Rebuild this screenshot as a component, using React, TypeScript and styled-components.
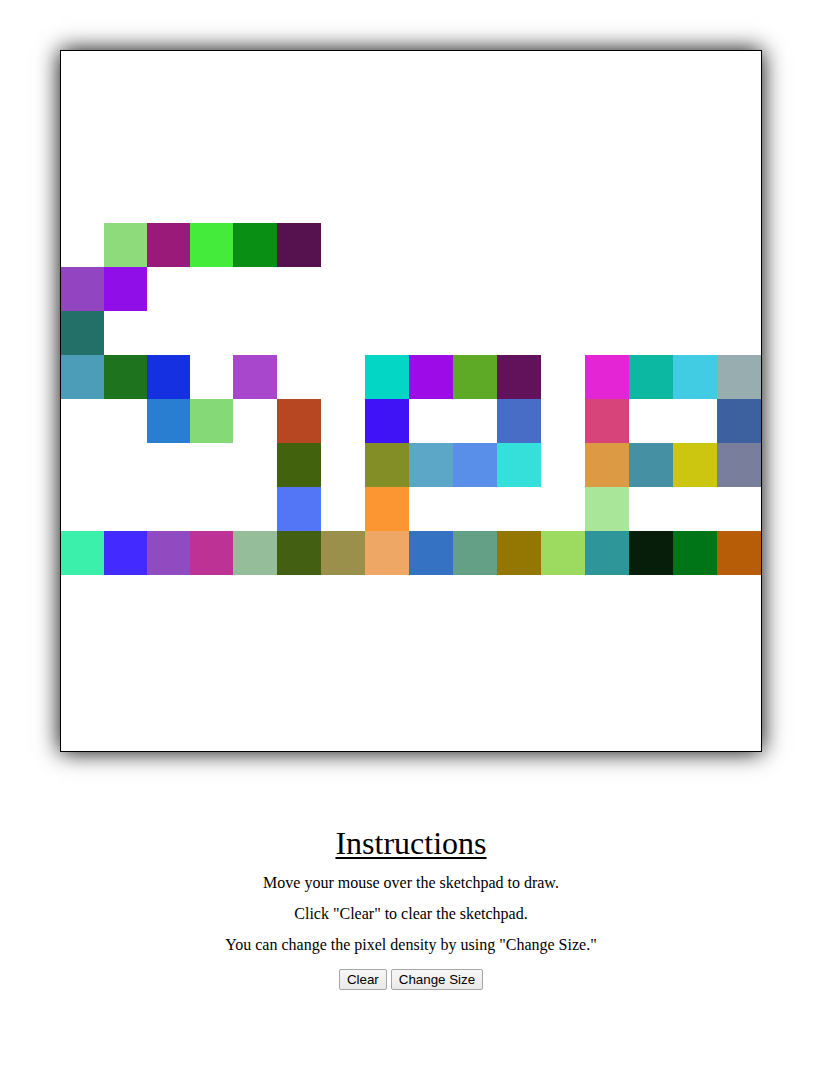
import React from "react";
import styled, { createGlobalStyle } from "styled-components";

const GlobalStyle = createGlobalStyle`
  html, body {
    margin: 0;
    padding: 0;
    background: #ffffff;
  }
  body {
    font-family: "Liberation Serif", "Times New Roman", serif;
    color: #000000;
  }
`;

const Page = styled.div`
  box-sizing: border-box;
  width: 100%;
  padding: 50px 0 60px 5px;
  display: flex;
  flex-direction: column;
  align-items: center;
`;

const Pad = styled.div`
  width: 700px;
  height: 700px;
  border: 1px solid #000000;
  background: #ffffff;
  box-shadow: 0 0 22px #000000;
  display: grid;
  grid-template-columns: repeat(4, 43px) repeat(12, 44px);
  grid-template-rows: repeat(4, 43px) repeat(12, 44px);
`;

const Cell = styled.div<{ $color?: string }>`
  background: ${(p) => p.$color ?? "transparent"};
`;

const Heading = styled.h1`
  margin: 73px 0 0;
  font-size: 32px;
  line-height: 37px;
  font-weight: normal;
  text-decoration: underline;
  text-decoration-thickness: 2px;
  text-underline-offset: 3px;
`;

const Line = styled.p<{ $first?: boolean }>`
  margin: ${(p) => (p.$first ? "12px" : "13px")} 0 0;
  font-size: 16px;
  line-height: 18px;
  text-align: center;
`;

const Buttons = styled.div`
  margin-top: 15px;
  display: flex;
  gap: 4px;
`;

const Button = styled.button`
  font-family: "Liberation Sans", Arial, sans-serif;
  font-size: 13.333px;
  line-height: 15px;
  padding: 2px 7px;
  border: 1px solid #a6a6a6;
  border-radius: 2px;
  background: linear-gradient(#f7f7f7, #e9e9e9);
  color: #000000;
  cursor: pointer;
`;

const painted: Record<number, Record<number, string>> = {
  4: { 1: "#8DDB7A", 2: "#9A1A7A", 3: "#45EB3A", 4: "#088F14", 5: "#56124F" },
  5: { 0: "#9145C1", 1: "#900FE8" },
  6: { 0: "#227067" },
  7: {
    0: "#4C9DB8", 1: "#1E741E", 2: "#1530E0", 4: "#A847CC",
    7: "#04D6C5", 8: "#9D0BE6", 9: "#5EA926", 10: "#62125A",
    12: "#E325D5", 13: "#0DB8A2", 14: "#42CCE4", 15: "#97ADB0",
  },
  8: {
    2: "#2A7ED2", 3: "#85D977", 5: "#B64722", 7: "#4012F6",
    10: "#476DC7", 12: "#D74479", 15: "#3D609F",
  },
  9: {
    5: "#43620E", 7: "#848E26", 8: "#5CA6C8", 9: "#598EE9", 10: "#35E0DA",
    12: "#DD9A44", 13: "#4690A3", 14: "#CCC610", 15: "#787E9C",
  },
  10: { 5: "#5276F5", 7: "#FB9632", 12: "#AAE69A" },
  11: {
    0: "#3AF0AA", 1: "#432BFF", 2: "#914BC1", 3: "#BC3295", 4: "#95BD99",
    5: "#425F12", 6: "#9A904B", 7: "#EEA764", 8: "#3672C3", 9: "#63A085",
    10: "#937702", 11: "#9CDB5F", 12: "#2E9598", 13: "#071F0A", 14: "#007518",
    15: "#B85D07",
  },
};

const SIZE = 16;

export default function App() {
  const cells: React.ReactNode[] = [];
  for (let r = 0; r < SIZE; r++) {
    for (let c = 0; c < SIZE; c++) {
      cells.push(<Cell key={`${r}-${c}`} $color={painted[r]?.[c]} />);
    }
  }
  return (
    <>
      <GlobalStyle />
      <Page>
        <Pad>{cells}</Pad>
        <Heading>Instructions</Heading>
        <Line $first>Move your mouse over the sketchpad to draw.</Line>
        <Line>Click "Clear" to clear the sketchpad.</Line>
        <Line>You can change the pixel density by using "Change Size."</Line>
        <Buttons>
          <Button type="button">Clear</Button>
          <Button type="button">Change Size</Button>
        </Buttons>
      </Page>
    </>
  );
}
